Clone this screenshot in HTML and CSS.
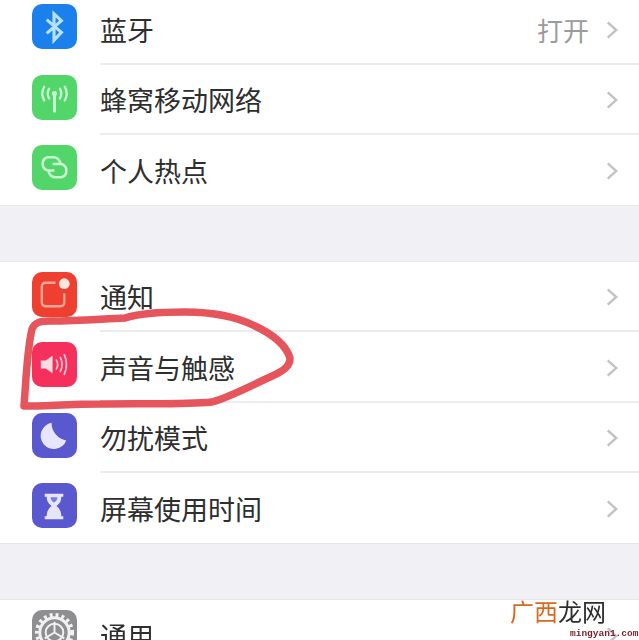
FILE: index.html
```html
<!DOCTYPE html>
<html lang="zh">
<head>
<meta charset="utf-8">
<title>设置</title>
<link rel="stylesheet" href="styles.css">
</head>
<body>
<main class="page">
  <div class="list">
    <section class="group group-first">
      <div class="row row-top">
        <span class="icon blue"><svg viewBox="0 0 46 46"><path d="M15 16 L30 29 L22.5 37 V10 L30 17 L15 30" fill="none" stroke="#b5e2f8" stroke-width="3.2"/></svg></span>
        <div class="body"><span class="label">蓝牙</span><span class="value">打开</span><svg class="chev" viewBox="0 0 14 22"><path d="M2 2 L12 11 L2 20" /></svg></div>
      </div>
      <div class="row">
        <span class="icon green"><svg viewBox="0 0 46 46"><g fill="none" stroke="#c9f5d0" stroke-width="2.4" stroke-linecap="round"><path d="M23 21 V37" stroke-width="3"/><circle cx="23" cy="19" r="2.6" fill="#c9f5d0" stroke="none"/><path d="M17.5 14 Q14.5 19 17.5 24"/><path d="M28.5 14 Q31.5 19 28.5 24"/><path d="M12.5 12 Q8.5 19 12.5 26"/><path d="M33.5 12 Q37.5 19 33.5 26"/></g></svg></span>
        <div class="body"><span class="label">蜂窝移动网络</span><svg class="chev" viewBox="0 0 14 22"><path d="M2 2 L12 11 L2 20" /></svg></div>
      </div>
      <div class="row">
        <span class="icon green"><svg viewBox="0 0 46 46"><g fill="none" stroke="#c9f5d0" stroke-width="2.6"><path d="M23 26 H16 A7 7 0 0 1 16 12.5 H22 A7 7 0 0 1 29 19"/><path d="M21 19.5 H30 A7 7 0 0 1 30 33 H24 A7 7 0 0 1 17 26.5"/></g></svg></span>
        <div class="body last"><span class="label">个人热点</span><svg class="chev" viewBox="0 0 14 22"><path d="M2 2 L12 11 L2 20" /></svg></div>
      </div>
    </section>
    <section class="group">
      <div class="row">
        <span class="icon red"><svg viewBox="0 0 46 46"><path d="M24 11 H14 Q10 11 10 15 V31 Q10 35 14 35 H29 Q33 35 33 31 V22" fill="none" stroke="#f5a897" stroke-width="2.4"/><circle cx="33" cy="12" r="5.5" fill="#fbe6df"/></svg></span>
        <div class="body"><span class="label">通知</span><svg class="chev" viewBox="0 0 14 22"><path d="M2 2 L12 11 L2 20" /></svg></div>
      </div>
      <div class="row">
        <span class="icon pink"><svg viewBox="0 0 46 46"><path d="M9 19 H14 L21 14 V32 L14 27 H9 Z" fill="#fbdce2"/><g fill="none" stroke="#fbc3cf" stroke-width="1.8" stroke-linecap="round"><path d="M25 18.5 Q27.5 23 25 27.5"/><path d="M29 16 Q32.5 23 29 30"/><path d="M33 13 Q37.5 23 33 33"/></g></svg></span>
        <div class="body"><span class="label">声音与触感</span><svg class="chev" viewBox="0 0 14 22"><path d="M2 2 L12 11 L2 20" /></svg></div>
      </div>
      <div class="row">
        <span class="icon indigo"><svg viewBox="0 0 46 46"><path d="M20 10 A13.5 13.5 0 1 0 35 28 A18 18 0 0 1 20 10 Z" fill="#e6e5f9"/></svg></span>
        <div class="body"><span class="label">勿扰模式</span><svg class="chev" viewBox="0 0 14 22"><path d="M2 2 L12 11 L2 20" /></svg></div>
      </div>
      <div class="row">
        <span class="icon indigo"><svg viewBox="0 0 46 46"><path d="M13 11 H32 V14 H30 Q30 20 25 23.5 Q30 27 30 34 H32 V37 H13 V34 H15 Q15 27 20 23.5 Q15 20 15 14 H13 Z" fill="#e6e5f9"/><path d="M19 14.5 H26 Q26 18 22.5 20 Q19 18 19 14.5 Z" fill="#7e7cdb"/></svg></span>
        <div class="body last"><span class="label">屏幕使用时间</span><svg class="chev" viewBox="0 0 14 22"><path d="M2 2 L12 11 L2 20" /></svg></div>
      </div>
    </section>
    <section class="group">
      <div class="row">
        <span class="icon gray"><svg viewBox="0 0 46 46"><circle cx="23" cy="23" r="15" fill="none" stroke="#f1f1f1" stroke-width="3"/><circle cx="23" cy="23" r="18" fill="none" stroke="#f1f1f1" stroke-width="4" stroke-dasharray="3 3.1"/><g fill="none" stroke="#f1f1f1" stroke-width="2"><circle cx="23" cy="23" r="9"/><path d="M23 23 V12 M23 23 L33 29 M23 23 L13 29"/></g></svg></span>
        <div class="body last"><span class="label">通用</span><svg class="chev" viewBox="0 0 14 22"><path d="M2 2 L12 11 L2 20" /></svg></div>
      </div>
    </section>
  </div>
  <svg class="scribble" viewBox="0 0 639 640"><path d="M24 406 C26 380 27 350 32 329 C35 322 40 321 50 321 C80 321 100 319 125 318 C140 313 160 312 185 312 C210 312 235 316 255 326 C272 334 286 345 290 358 C290 366 284 371 270 377 C250 386 232 396 212 402 C180 405 140 403 100 404 C70 404 45 406 24 406 Z" fill="none" stroke="#e6545c" stroke-width="7.5" stroke-linejoin="round"/></svg>
  <div class="mark"><div class="mark-name"><span class="orange">广西</span>龙网</div><div class="mark-url">mingyan1.com</div></div>
</main>
</body>
</html>
```
FILE: styles.css
```css
* { box-sizing: border-box; }
html, body { margin: 0; padding: 0; }
body { background: #f0f0f5; overflow: hidden; }
.page {
  position: relative;
  width: 639px;
  height: 640px;
  overflow: hidden;
  font-family: "Noto Sans CJK SC", "Liberation Sans", sans-serif;
}
.list { display: flex; flex-direction: column; gap: 55px; filter: blur(0.7px); }
.group { background: #fff; border-top: 1px solid #e6e6e8; border-bottom: 1px solid #e6e6e8; }
.group-first { border-top: 0; }
.row { display: flex; height: 70.3px; padding-left: 32px; }
.row-top { height: 64.5px; }
.icon {
  flex: none;
  width: 45px;
  height: 45px;
  margin-top: 10px;
  border-radius: 10px;
  display: flex;
}
.row-top .icon { margin-top: 4px; }
.icon svg { width: 45px; height: 45px; }
.blue { background: #1b80ec; }
.green { background: #52d66a; }
.red { background: #ee3f30; }
.pink { background: #f5305c; }
.indigo { background: #5a58cf; }
.gray { background: #8e8e90; }
.body {
  flex: 1;
  margin-left: 23px;
  padding: 2px 21px 0 0;
  display: flex;
  align-items: center;
  border-bottom: 2px solid #ececee;
}
.body.last { border-bottom: 0; }
.row-top .body { padding-top: 0; padding-bottom: 2px; }
.label { flex: 1; font-size: 27px; line-height: 36px; color: #2e2e2e; }
.value { font-size: 26px; line-height: 36px; color: #9b9b9b; margin-right: 17px; }
.chev { flex: none; width: 12px; height: 20px; fill: none; stroke: #c2c2c6; stroke-width: 2.8; }
.scribble { position: absolute; left: 0; top: 0; width: 639px; height: 640px; filter: blur(0.5px); }
.mark { position: absolute; left: 510px; top: 597px; width: 129px; }
.mark-name { font-size: 24px; line-height: 28px; color: #2c2c2c; }
.orange { color: #d8691f; }
.mark-url { font-family: "Liberation Mono", monospace; font-size: 9.5px; line-height: 12px; color: #7a1f2a; font-weight: 700; margin: 3px 0 0 60px; white-space: nowrap; }
```
